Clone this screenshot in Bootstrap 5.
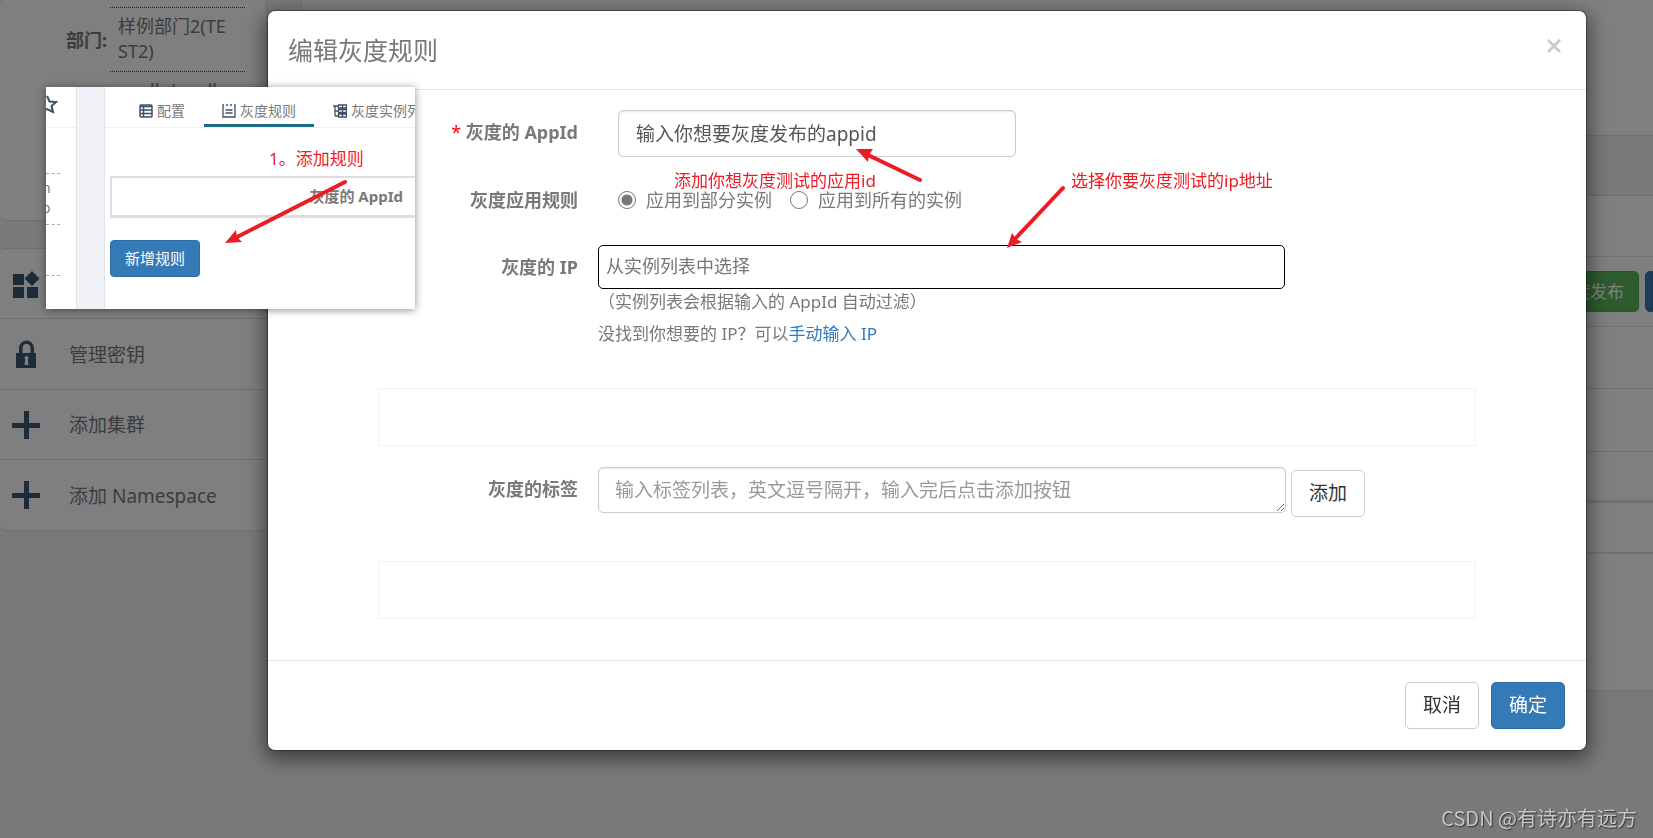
<!DOCTYPE html>
<html lang="zh-CN">
<head>
<meta charset="utf-8">
<meta name="viewport" content="width=device-width, initial-scale=1">
<title>编辑灰度规则</title>
<link href="https://cdn.jsdelivr.net/npm/bootstrap@5.3.0/dist/css/bootstrap.min.css" rel="stylesheet">
<style>
  body { background: #f1f2f7; color: #797979; font-family: "Noto Sans", "Noto Sans CJK SC", sans-serif; font-size: 18px; line-height: 24px; overflow: hidden; }
  a { color: #337ab7; text-decoration: none; }
  .page { height: 100vh; overflow: hidden; }
  .side { width: 267px; }
  .panel { background: #fff; border: 1px solid #dfdfe0; }
  .side .panel { border-left: 0; border-radius: 6px 0 6px 6px; }
  .info { height: 221px; padding: 7px 21px 0 0; }
  .info table { width: 100%; }
  .info th { text-align: right; padding-right: 3px; vertical-align: middle; font-weight: 700; }
  .info td { width: 135px; border-top: 1px dotted #444; padding: 6px 16px 7px 8px; line-height: 25px; word-break: break-all; }
  .tool { height: 70px; padding: 1px 0 0 12px; gap: 28px; border-bottom: 1px solid #dfdfe0; color: #797979; font-size: 19px; }
  .tool:nth-child(2) { height: 71px; }
  .tool:last-child { border-bottom: 0; }
  .tool svg { width: 29px; height: 29px; fill: #3c5676; }
  .work { margin-left: 34px; }
  .work-top { height: 136px; border-top: 0; }
  .work-main { margin-top: 59px; height: 496px; }
  .work-main > div { border-bottom: 1px solid #e3e3e8; }
  .btn { font-size: 19px; line-height: 25px; border-radius: 5px; padding: 10px 17px; }
  .btn-plain { background: #fff; border: 1px solid #ccc; color: #333; }
  .btn-main { background: #337ab7; border: 1px solid #2e6da4; color: #fff; }
  .btn-pub { background: #5cb85c; border: 1px solid #4cae4c; color: #fff; font-size: 17px; padding: 7px 14px; }
  .shade { background: rgba(0,0,0,.5); }
  .modal-dialog { max-width: none; margin: 11px 67px 0 268px; }
  .modal-content { border: 0; border-radius: 7px; color: #797979; box-shadow: 0 0 0 1px rgba(0,0,0,.3), 0 6px 20px 3px rgba(0,0,0,.5); }
  .modal-header { height: 79px; padding: 0 20px; border-color: #e5e5e5; }
  .modal-title { font-size: 25px; line-height: 32px; }
  .close-x { border: 0; background: none; padding: 0 5px; color: #ccc; line-height: 0; }
  .modal-body { padding: 20px 110px 41px; }
  .modal-footer { border-color: #e5e5e5; padding: 21px; gap: 12px; }
  .modal-footer > * { margin: 0; }
  .form-line { padding-right: 191px; }
  .form-line > label, .form-line > .caption { flex: 0 0 220px; padding-right: 20px; text-align: right; font-weight: 700; line-height: 24px; }
  .form-control, .form-control:focus { border: 1px solid #ccc; border-radius: 5px; color: #555; font-size: 19px; line-height: 25px; padding: 11px 17px 9px; box-shadow: inset 0 1px 2px rgba(0,0,0,.1); }
  .form-control::placeholder { color: #999; }
  .app-input { width: 58%; margin-left: 20px; }
  .ip-input, .ip-input:focus { border-color: #000; font-size: 18px; line-height: 24px; padding: 8px 7px 10px; box-shadow: none; }
  .ip-input::placeholder { color: #777; }
  .tag-input { height: 46px; min-height: 46px; padding: 10px 16px; overflow: hidden; resize: both; }
  .pick { appearance: none; width: 18px; height: 18px; border: 1px solid #767676; border-radius: 50%; margin: 3px 10px 0 0; }
  .pick:checked { background: radial-gradient(circle, #767676 5px, transparent 6px); }
  .hint { font-size: 17px; line-height: 24px; }
  .chips { height: 58px; border: 1px solid #f1f2f7; }
  .note { position: absolute; color: #ed1c24; font-size: 17px; line-height: 24px; white-space: nowrap; }
  .arrow { position: absolute; overflow: visible; fill: #ed1c24; stroke: #ed1c24; }
  .arrow line { stroke-width: 4; stroke-linecap: round; }
  .arrow path { stroke: none; }
  .clip { position: absolute; z-index: 1060; left: 46px; top: 87px; width: 369px; height: 222px; background: #f1f2f7; overflow: hidden; font-size: 14px; line-height: 20px; }
  .clip-shadow { position: absolute; z-index: 1059; left: 46px; top: 87px; width: 369px; height: 222px; box-shadow: 0 1px 8px rgba(0,0,0,.45); }
  .clip-side { width: 31px; background: #fff; border-right: 1px solid #e4e4e8; }
  .clip-head { height: 41px; border-bottom: 1px solid #eff0f5; }
  .clip-side p { width: 14px; margin: 0; height: 51px; border-bottom: 1px dashed #aaa; line-height: 20px; overflow: hidden; }
  .clip-side p span { display: block; margin-left: -4px; }
  .clip-main { margin-left: 27px; background: #fff; border-left: 1px solid #e4e4e8; }
  .tab { height: 40px; padding: 8px 19px 0; gap: 4px; color: #797979; white-space: nowrap; }
  .tab.on { border-bottom: 3px solid #1b6d85; padding: 11px 18px 0; }
  .tab svg { width: 14px; height: 14px; fill: none; stroke: #3c5068; }
  .clip-box { margin: 48px 0 0 5px; height: 42px; border: 1px solid #ddd; border-width: 2px 0 3px 2px; font-size: 15px; line-height: 20px; padding: 0 12px 2px 0; }
  .clip .btn { margin: 22px 0 0 5px; font-size: 15px; line-height: 20px; padding: 7px 14px 8px; border-radius: 4px; }
  .mark-text { position: absolute; z-index: 1070; right: 16px; bottom: 6px; font-family: "Noto Sans CJK SC", sans-serif; font-size: 20px; line-height: 28px; color: #c6c6c8; text-shadow: 1px 1px 1px #333; }
</style>
</head>
<body>
<div class="page d-flex align-items-start">
  <aside class="side flex-shrink-0">
    <section class="panel info overflow-hidden border-top-0">
      <table>
        <tr><th>部门:</th><td>样例部门2(TEST2)</td></tr>
        <tr><th></th><td>apollo(apollo)</td></tr>
      </table>
    </section>
    <nav class="panel d-flex flex-column" style="margin-top:27px">
      <a class="tool d-flex align-items-center" href="#" aria-label="管理项目"><svg viewBox="0 0 29 29"><path d="M1 4h11v11H1zM1 17h11v11H1zM15 17h11v11H15zM20 1l7.500 7.500L20 16l-7.500-7.500z"/></svg></a>
      <a class="tool d-flex align-items-center" href="#"><svg viewBox="0 0 29 29"><path fill-rule="evenodd" d="M4 13h3V8a7.500 7.500 0 0 1 15 0v5h2v15H4zM10.500 13h8V8a4 4 0 0 0-8 0zM14.500 16a2 2 0 0 0-1.300 3.500L12.500 25h4l-.7-5.500A2 2 0 0 0 14.500 16z"/></svg>管理密钥</a>
      <a class="tool d-flex align-items-center" href="#"><svg viewBox="0 0 29 29"><path d="M12 0h5v12h11v5H17v11h-5V17H0v-5h12z"/></svg>添加集群</a>
      <a class="tool d-flex align-items-center" href="#"><svg viewBox="0 0 29 29"><path d="M12 0h5v12h11v5H17v11h-5V17H0v-5h12z"/></svg>添加 Namespace</a>
    </nav>
  </aside>
  <main class="work flex-fill">
    <section class="panel work-top border-end-0"></section>
    <section class="panel work-main border-end-0">
      <div style="height:61px"></div>
      <div class="d-flex justify-content-end align-items-center overflow-hidden" style="height:70px;gap:6px">
        <button class="btn btn-pub text-nowrap" type="button">灰度发布</button>
        <button class="btn btn-main px-0 rounded-end-0" type="button" style="width:8px;height:41px" aria-label="发布"></button>
      </div>
      <div style="height:62px"></div>
      <div style="height:63px"></div>
      <div style="height:51px;border-bottom-width:3px"></div>
      <div style="height:51px;border-bottom-width:2px"></div>
    </section>
  </main>
</div>

<div class="shade position-fixed top-0 start-0 w-100 h-100"></div>
<div class="modal d-block" role="dialog" aria-labelledby="dlg">
  <div class="modal-dialog">
    <form class="modal-content">
      <div class="modal-header">
        <h4 class="modal-title fw-normal" id="dlg">编辑灰度规则</h4>
        <button type="button" class="close-x ms-auto pb-2" aria-label="关闭"><svg width="14" height="14" viewBox="0 0 14 14"><path d="M1 1l12 12M13 1L1 13" stroke="#ccc" stroke-width="3"/></svg></button>
      </div>
      <div class="modal-body">
        <div class="form-line d-flex">
          <label for="app" style="padding-top:10px"><span class="fw-normal" style="color:red">*</span> 灰度的 AppId</label>
          <div class="flex-fill"><input class="form-control app-input" id="app" value="输入你想要灰度发布的appid"></div>
        </div>
        <div class="form-line d-flex" style="margin-top:31px">
          <span class="caption">灰度应用规则</span>
          <div class="flex-fill d-flex ps-3 ms-1">
            <label class="d-flex me-3" style="padding-right:2px"><input class="pick" type="radio" name="scope" checked>应用到部分实例</label>
            <label class="d-flex"><input class="pick" type="radio" name="scope">应用到所有的实例</label>
          </div>
        </div>
        <div class="form-line d-flex" style="margin-top:33px">
          <label style="padding-top:10px" for="ip">灰度的 IP</label>
          <div class="flex-fill">
            <input class="form-control ip-input" id="ip" placeholder="从实例列表中选择">
            <div class="hint" style="padding-top:1px">（实例列表会根据输入的 AppId 自动过滤）</div>
            <div class="hint mt-2">没找到你想要的 IP？可以<a href="#">手动输入 IP</a></div>
          </div>
        </div>
        <div class="chips" style="margin-top:42px"></div>
        <div class="form-line d-flex" style="margin-top:21px;padding-right:111px">
          <label for="tags" style="padding-top:10px">灰度的标签</label>
          <div class="flex-fill d-flex align-items-start" style="gap:5px">
            <textarea class="form-control tag-input flex-fill" id="tags" rows="1" placeholder="输入标签列表，英文逗号隔开，输入完后点击添加按钮"></textarea>
            <button type="button" class="btn btn-plain text-nowrap" style="margin-top:3px">添加</button>
          </div>
        </div>
        <div class="chips" style="margin-top:44px"></div>
      </div>
      <div class="modal-footer">
        <button type="button" class="btn btn-plain">取消</button>
        <button type="button" class="btn btn-main">确定</button>
      </div>
      <span class="note" style="left:406px;top:158px">添加你想灰度测试的应用id</span>
      <svg class="arrow" style="left:588px;top:138px" width="66" height="32"><line x1="64" y1="31" x2="12" y2="6"/><path d="M0 0l17 0-4 6-1 7z"/></svg>
      <span class="note" style="left:803px;top:158px">选择你要灰度测试的ip地址</span>
      <svg class="arrow" style="left:739px;top:177px" width="57" height="60"><line x1="56" y1="0" x2="8" y2="51"/><path d="M0 60L5 45l4 6 6 3z"/></svg>
    </form>
  </div>
</div>

<div class="clip-shadow"></div>
<div class="clip d-flex">
  <div class="clip-side flex-shrink-0">
    <div class="clip-head"><svg width="16" height="30" viewBox="0 0 16 30"><path d="M1 9l2.500 5.500 6.500.5-4.500 4 1.500 6L1 22l-6 3" fill="none" stroke="#3c5068" stroke-width="2"/></svg></div>
    <p style="height:46px"></p><p class="pt-1"><span>n<br>o</span></p><p></p>
  </div>
  <div class="clip-main flex-fill overflow-hidden">
    <div class="clip-head d-flex ps-2 pt-0">
      <div class="tab d-flex align-items-center" style="padding-left:26px"><svg viewBox="0 0 14 14"><rect x="1" y="1" width="12" height="12" rx="1" stroke-width="1.500"/><path d="M1 2.500h12M1 6h12M1 9.500h12M4.500 2v11" stroke-width="1.500"/></svg>配置</div>
      <div class="tab on d-flex align-items-center"><svg viewBox="0 0 14 14"><path d="M2 1H1v12h12V1h-1M4 1h2M8 1h2M3.500 6h7M3.500 9h7" stroke-width="1.300"/></svg>灰度规则</div>
      <div class="tab d-flex align-items-center"><svg viewBox="0 0 14 14"><path d="M0 2h5M2 2v10M2 7h3M2 12h3M5.500 1h8v3h-8zM5.500 5.500h8v3h-8zM5.500 10h8v3h-8zM9.500 1v12" stroke-width="1.300"/></svg>灰度实例列表</div>
    </div>
    <div class="clip-box d-flex align-items-center justify-content-end fw-bold">灰度的 AppId</div>
    <button type="button" class="btn btn-main">新增规则</button>
  </div>
  <span class="note" style="left:223px;top:60px">1。添加规则</span>
  <svg class="arrow" style="left:179px;top:95px" width="121" height="61"><line x1="120" y1="0" x2="12" y2="55"/><path d="M0 61L11 48l1 7 5 5z"/></svg>
</div>
<div class="mark-text">CSDN @有诗亦有远方</div>
<script src="https://cdn.jsdelivr.net/npm/bootstrap@5.3.0/dist/js/bootstrap.bundle.min.js"></script>
</body>
</html>
